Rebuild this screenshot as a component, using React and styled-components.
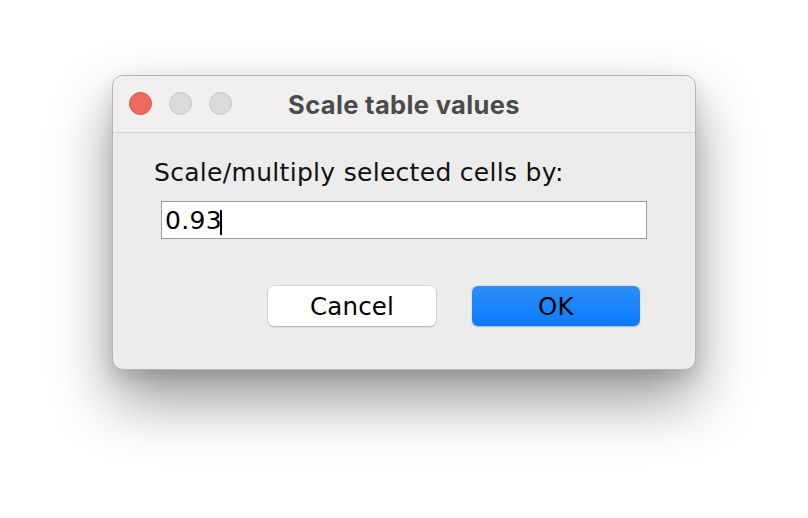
import React, { useState } from 'react';
import styled, { createGlobalStyle } from 'styled-components';

const GlobalStyle = createGlobalStyle`
  html, body {
    margin: 0;
    padding: 0;
    background: #ffffff;
  }
`;

const Page = styled.div`
  width: 808px;
  height: 518px;
  display: flex;
  justify-content: center;
  align-items: flex-start;
  padding-top: 75px;
  box-sizing: border-box;
  overflow: hidden;
`;

const Window = styled.div`
  width: 584px;
  height: 295px;
  box-sizing: border-box;
  border: 1px solid #b4b4b4;
  border-radius: 11px;
  background: #ececec;
  box-shadow: 0 30px 60px rgba(0, 0, 0, 0.4), 0 8px 18px rgba(0, 0, 0, 0.12);
  display: flex;
  flex-direction: column;
  overflow: hidden;
`;

const TitleBar = styled.div`
  position: relative;
  height: 56px;
  flex-shrink: 0;
  background: #f1f0ef;
  border-bottom: 1px solid #d2d2d2;
  display: flex;
  align-items: center;
  justify-content: center;
`;

const Lights = styled.div`
  position: absolute;
  left: 16px;
  top: 16px;
  display: flex;
  gap: 17px;
`;

const Light = styled.span`
  width: 23px;
  height: 23px;
  border-radius: 50%;
  box-sizing: border-box;
  background: ${(p) => (p.$active ? '#ee6a5e' : '#dcdbda')};
  border: 1px solid ${(p) => (p.$active ? '#d55448' : '#c8c7c6')};
`;

const Title = styled.div`
  font-family: Inter, "Liberation Sans", sans-serif;
  font-weight: 700;
  font-size: 25.5px;
  letter-spacing: 0.35px;
  color: #4b4b4b;
  margin-top: 1px;
`;

const Body = styled.div`
  flex: 1;
  display: flex;
  flex-direction: column;
  padding: 24px 48px 0 41px;
  font-family: "DejaVu Sans", "Liberation Sans", sans-serif;
`;

const Prompt = styled.label`
  font-size: 25px;
  letter-spacing: 0.3px;
  color: #111;
  line-height: 32px;
`;

const FieldWrap = styled.div`
  position: relative;
  margin: 12px 0 0 7px;
  width: 486px;
  height: 38px;
`;

const Field = styled.input`
  width: 100%;
  height: 100%;
  box-sizing: border-box;
  border: 1px solid #8e9db1;
  background: #fff;
  padding: 0 0 0 3px;
  font-family: "DejaVu Sans", "Liberation Sans", sans-serif;
  font-size: 25px;
  letter-spacing: 0.3px;
  color: #000;
  caret-color: transparent;
  outline: none;
`;

const Caret = styled.span`
  position: absolute;
  left: 59px;
  top: 9px;
  width: 2px;
  height: 25px;
  background: #000;
  pointer-events: none;
`;

const Buttons = styled.div`
  display: flex;
  justify-content: flex-end;
  gap: 36px;
  margin-top: 47px;
  padding-right: 7px;
`;

const Button = styled.button`
  width: 168px;
  height: 40px;
  border-radius: 6px;
  border: none;
  font-family: "DejaVu Sans", "Liberation Sans", sans-serif;
  font-size: 24.5px;
  letter-spacing: 0.2px;
  color: #000;
  padding: 0;
  background: ${(p) =>
    p.$primary ? 'linear-gradient(#2d8ef7, #0a7bff)' : '#ffffff'};
  box-shadow: ${(p) =>
    p.$primary
      ? '0 0.5px 1.5px rgba(0,0,0,0.25)'
      : '0 0 0 0.5px rgba(0,0,0,0.12), 0 1px 2px rgba(0,0,0,0.22)'};
`;

export default function App() {
  const [value, setValue] = useState('0.93');
  return (
    <>
      <GlobalStyle />
      <Page>
        <Window>
          <TitleBar>
            <Lights>
              <Light $active />
              <Light />
              <Light />
            </Lights>
            <Title>Scale table values</Title>
          </TitleBar>
          <Body>
            <Prompt htmlFor="scale">Scale/multiply selected cells by:</Prompt>
            <FieldWrap>
              <Field
                id="scale"
                value={value}
                onChange={(e) => setValue(e.target.value)}
              />
              <Caret />
            </FieldWrap>
            <Buttons>
              <Button>Cancel</Button>
              <Button $primary>OK</Button>
            </Buttons>
          </Body>
        </Window>
      </Page>
    </>
  );
}
